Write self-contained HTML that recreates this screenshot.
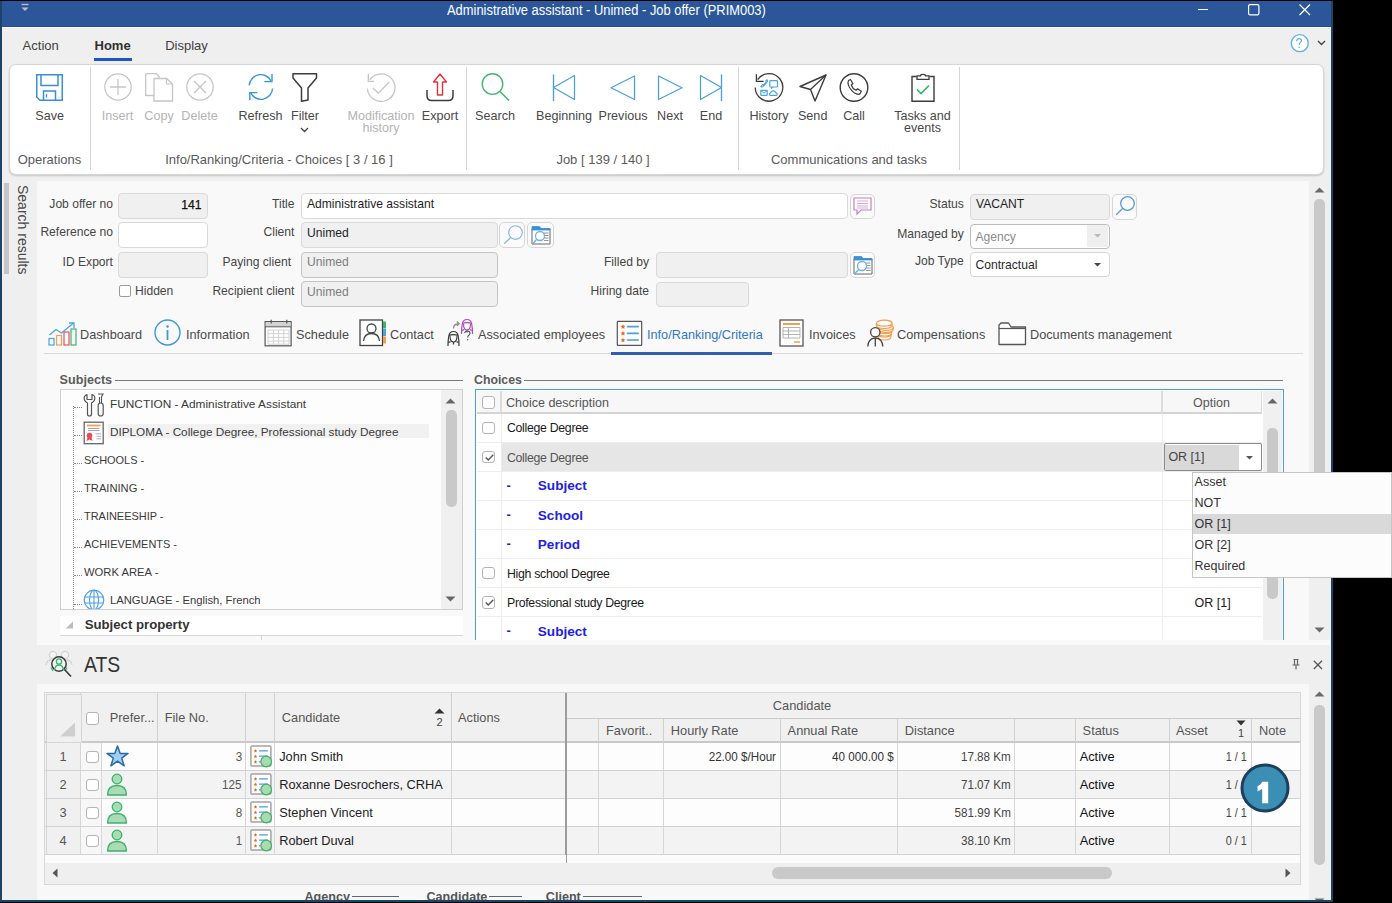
<!DOCTYPE html>
<html><head><meta charset="utf-8"><title>Job offer</title>
<style>
html,body{margin:0;padding:0;}
body{width:1392px;height:903px;background:#000;position:relative;overflow:hidden;font-family:"Liberation Sans",sans-serif;}
.t{position:absolute;white-space:nowrap;line-height:1;}
.r{position:absolute;}
.s{position:absolute;overflow:visible;}
</style></head><body>
<div class="r" style="left:0px;top:1px;width:1333px;height:900px;background:#1d4467;"></div><div class="r" style="left:2px;top:1px;width:1329px;height:899px;background:#efefef;"></div><div class="r" style="left:2px;top:1px;width:1329px;height:26px;background:#2b579a;"></div><div class="r" style="left:2px;top:26px;width:1329px;height:1px;background:#224c92;"></div><div class="r" style="left:2px;top:27px;width:1329px;height:1px;background:#fafafa;"></div><div class="t" style="top:3.92px;font-size:13.8px;color:#ffffff;left:446.80px;transform:scaleX(0.935);transform-origin:0 0;">Administrative assistant - Unimed - Job offer (PRIM003)</div><svg class="s" style="left:20px;top:3px;" width="10" height="10" viewBox="0 0 10 10" fill="none"><path d="M1.5 1.5H8.5" stroke="#b8bfcc" stroke-width="1.3"/><path d="M1.5 4.5H8.5L5 8Z" fill="#b8bfcc"/></svg><div class="r" style="left:1198px;top:9px;width:10px;height:1px;background:#ffffff;"></div><svg class="s" style="left:1248px;top:4px;" width="12" height="12" viewBox="0 0 12 12" fill="none"><rect x="0.6" y="0.6" width="10.3" height="10.3" rx="1.5" stroke="#fff" stroke-width="1.2"/></svg><svg class="s" style="left:1299px;top:4px;" width="12" height="12" viewBox="0 0 12 12" fill="none"><path d="M0.5 0.5L11 11M11 0.5L0.5 11" stroke="#fff" stroke-width="1.2"/></svg><div class="t" style="top:38.99px;font-size:13px;color:#404040;left:22.60px;">Action</div><div class="t" style="top:38.99px;font-size:13px;color:#303030;font-weight:bold;left:94.50px;">Home</div><div class="r" style="left:94px;top:58px;width:38px;height:3px;background:#1e55c0;"></div><div class="t" style="top:38.99px;font-size:13px;color:#404040;left:165.20px;">Display</div><svg class="s" style="left:1290px;top:34px;" width="20" height="20" viewBox="0 0 20 20" fill="none"><circle cx="9.8" cy="9.2" r="8.5" stroke="#64aee0" stroke-width="1.3" fill="#fff"/><path d="M6.6 7.2C6.6 5.6 7.7 4.6 9.1 4.6C10.6 4.6 11.5 5.6 11.5 6.8C11.5 8.3 9.2 8.6 9.2 10.6V11" stroke="#64aee0" stroke-width="1.2" fill="none"/><circle cx="9.2" cy="13.2" r="0.8" fill="#64aee0"/></svg><svg class="s" style="left:1317px;top:40px;" width="9" height="6" viewBox="0 0 9 6" fill="none"><path d="M1 1L4.5 4.5L8 1" stroke="#444" stroke-width="1.4"/></svg><div class="r" style="left:9px;top:64px;width:1315px;height:111px;background:#ffffff;border:1px solid #d6d6d6;box-sizing:border-box;border-radius:7px;box-shadow:0 1px 2px rgba(0,0,0,0.18);"></div><div class="r" style="left:90px;top:67px;width:1px;height:103px;background:#d4d4d4;"></div><div class="r" style="left:466px;top:67px;width:1px;height:103px;background:#d4d4d4;"></div><div class="r" style="left:738px;top:67px;width:1px;height:103px;background:#d4d4d4;"></div><div class="r" style="left:959px;top:67px;width:1px;height:103px;background:#d4d4d4;"></div><div class="t" style="top:109.63px;font-size:12.6px;color:#484848;left:-250.40px;width:600px;text-align:center;">Save</div><div class="t" style="top:109.63px;font-size:12.6px;color:#b4b4b4;left:-182.50px;width:600px;text-align:center;">Insert</div><div class="t" style="top:109.63px;font-size:12.6px;color:#b4b4b4;left:-141.00px;width:600px;text-align:center;">Copy</div><div class="t" style="top:109.63px;font-size:12.6px;color:#b4b4b4;left:-100.50px;width:600px;text-align:center;">Delete</div><div class="t" style="top:109.63px;font-size:12.6px;color:#484848;left:-39.50px;width:600px;text-align:center;">Refresh</div><div class="t" style="top:109.63px;font-size:12.6px;color:#484848;left:5.00px;width:600px;text-align:center;">Filter</div><svg class="s" style="left:300px;top:127px;" width="9" height="6" viewBox="0 0 9 6" fill="none"><path d="M1 1L4.5 4.5L8 1" stroke="#444" stroke-width="1.3"/></svg><div class="t" style="top:109.63px;font-size:12.6px;color:#b4b4b4;left:81.00px;width:600px;text-align:center;">Modification</div><div class="t" style="top:122.13px;font-size:12.6px;color:#b4b4b4;left:81.00px;width:600px;text-align:center;">history</div><div class="t" style="top:109.63px;font-size:12.6px;color:#484848;left:140.00px;width:600px;text-align:center;">Export</div><div class="t" style="top:109.63px;font-size:12.6px;color:#484848;left:195.00px;width:600px;text-align:center;">Search</div><div class="t" style="top:109.63px;font-size:12.6px;color:#484848;left:264.00px;width:600px;text-align:center;">Beginning</div><div class="t" style="top:109.63px;font-size:12.6px;color:#484848;left:323.00px;width:600px;text-align:center;">Previous</div><div class="t" style="top:109.63px;font-size:12.6px;color:#484848;left:370.00px;width:600px;text-align:center;">Next</div><div class="t" style="top:109.63px;font-size:12.6px;color:#484848;left:411.00px;width:600px;text-align:center;">End</div><div class="t" style="top:109.63px;font-size:12.6px;color:#484848;left:469.00px;width:600px;text-align:center;">History</div><div class="t" style="top:109.63px;font-size:12.6px;color:#484848;left:512.70px;width:600px;text-align:center;">Send</div><div class="t" style="top:109.63px;font-size:12.6px;color:#484848;left:554.00px;width:600px;text-align:center;">Call</div><div class="t" style="top:109.63px;font-size:12.6px;color:#484848;left:622.50px;width:600px;text-align:center;">Tasks and</div><div class="t" style="top:122.13px;font-size:12.6px;color:#484848;left:622.50px;width:600px;text-align:center;">events</div><div class="t" style="top:152.99px;font-size:13px;color:#5a5a5a;left:-250.50px;width:600px;text-align:center;">Operations</div><div class="t" style="top:152.99px;font-size:13px;color:#5a5a5a;left:-21.00px;width:600px;text-align:center;">Info/Ranking/Criteria - Choices [ 3 / 16 ]</div><div class="t" style="top:152.99px;font-size:13px;color:#5a5a5a;left:303.00px;width:600px;text-align:center;">Job [ 139 / 140 ]</div><div class="t" style="top:152.99px;font-size:13px;color:#5a5a5a;left:549.00px;width:600px;text-align:center;">Communications and tasks</div><svg class="s" style="left:36px;top:74px;" width="27" height="27" viewBox="0 0 27 27" fill="none"><path d="M0.75 0.75H26.25V26.25H4L0.75 23Z" stroke="#3a8fd5" stroke-width="1.5"/><path d="M5 0.75V11.5H22V0.75" stroke="#3a8fd5" stroke-width="1.5"/><path d="M7.5 26.25V17H19.5V26.25" stroke="#3a8fd5" stroke-width="1.5"/><path d="M10.5 20V23.5" stroke="#3a8fd5" stroke-width="1.3"/></svg><svg class="s" style="left:104px;top:73px;" width="28" height="28" viewBox="0 0 28 28" fill="none"><circle cx="14" cy="14" r="13.2" stroke="#c6c6c6" stroke-width="1.3"/><path d="M14 6V22M6 14H22" stroke="#c6c6c6" stroke-width="1.3"/></svg><svg class="s" style="left:145px;top:73px;" width="29" height="29" viewBox="0 0 29 29" fill="none"><path d="M0.7 0.7H11.5L14 3.2V5.5" stroke="#c6c6c6" stroke-width="1.3"/><path d="M0.7 0.7V22.5H9" stroke="#c6c6c6" stroke-width="1.3"/><path d="M9 5.5H21.5L27.5 11V28H9Z" stroke="#c6c6c6" stroke-width="1.3"/><path d="M21.5 5.5V11H27.5" stroke="#c6c6c6" stroke-width="1.1"/></svg><svg class="s" style="left:186px;top:73px;" width="28" height="28" viewBox="0 0 28 28" fill="none"><circle cx="14" cy="14" r="13.2" stroke="#c6c6c6" stroke-width="1.3"/><path d="M8 8L20 20M20 8L8 20" stroke="#c6c6c6" stroke-width="1.3"/></svg><svg class="s" style="left:247px;top:73px;" width="28" height="28" viewBox="0 0 28 28" fill="none"><path d="M2.2 12.5A11.6 11.6 0 0 1 24 7.8" stroke="#3298dc" stroke-width="1.4"/><path d="M25 1V8.6H17.4" stroke="#3298dc" stroke-width="1.4"/><path d="M25.6 15.5A11.6 11.6 0 0 1 3.8 20.2" stroke="#3298dc" stroke-width="1.4"/><path d="M2.8 27.2V19.6H10.4" stroke="#3298dc" stroke-width="1.4"/></svg><svg class="s" style="left:292px;top:73px;" width="26" height="29" viewBox="0 0 26 29" fill="none"><path d="M1 0.8H24.5V5L16 15V27L9.5 28.2V15L1 5Z" stroke="#3c3c3c" stroke-width="1.5" stroke-linejoin="round"/></svg><svg class="s" style="left:366px;top:73px;" width="30" height="30" viewBox="0 0 30 30" fill="none"><path d="M3.8 6.8A13.8 13.8 0 1 1 1.4 15.5" stroke="#c6c6c6" stroke-width="1.3"/><path d="M2.3 0.8V8.3H8.3" stroke="#c6c6c6" stroke-width="1.3"/><path d="M6.9 15.1L12.3 20.1L23.3 9" stroke="#c6c6c6" stroke-width="1.3"/></svg><svg class="s" style="left:426px;top:73px;" width="28" height="29" viewBox="0 0 28 29" fill="none"><path d="M1 17V22.5C1 25.5 2.5 27.5 5.5 27.5H22.5C25.5 27.5 27 25.5 27 22.5V17" stroke="#3c3c3c" stroke-width="1.5"/><path d="M14 1L20.5 9H16.5V22H11.5V9H7.5Z" stroke="#e8323a" stroke-width="1.4" stroke-linejoin="round"/></svg><svg class="s" style="left:481px;top:72px;" width="30" height="30" viewBox="0 0 30 30" fill="none"><circle cx="11.5" cy="12" r="10.3" stroke="#44b574" stroke-width="1.35"/><path d="M19 19.5L28 28.5" stroke="#44b574" stroke-width="1.6"/></svg><svg class="s" style="left:552px;top:74px;" width="25" height="28" viewBox="0 0 25 28" fill="none"><path d="M1.5 0.5V27" stroke="#49a0dc" stroke-width="1.35"/><path d="M22.5 1.5V25.5L1.5 13.5Z" stroke="#49a0dc" stroke-width="1.25" stroke-linejoin="round"/></svg><svg class="s" style="left:610px;top:75px;" width="26" height="26" viewBox="0 0 26 26" fill="none"><path d="M24.5 1V24.5L1 12.75Z" stroke="#49a0dc" stroke-width="1.25" stroke-linejoin="round"/></svg><svg class="s" style="left:657px;top:75px;" width="26" height="26" viewBox="0 0 26 26" fill="none"><path d="M1.5 1V24.5L25 12.75Z" stroke="#49a0dc" stroke-width="1.25" stroke-linejoin="round"/></svg><svg class="s" style="left:699px;top:74px;" width="25" height="28" viewBox="0 0 25 28" fill="none"><path d="M22.5 0.5V27" stroke="#49a0dc" stroke-width="1.35"/><path d="M1.5 1.5V25.5L22.5 13.5Z" stroke="#49a0dc" stroke-width="1.25" stroke-linejoin="round"/></svg><svg class="s" style="left:754px;top:73px;" width="30" height="30" viewBox="0 0 30 30" fill="none"><path d="M3.6 6.6A13.8 13.8 0 1 1 1.2 14.5" stroke="#3c3c3c" stroke-width="1.3"/><path d="M2.4 1.2V8.3H9.6" stroke="#3c3c3c" stroke-width="1.3"/><rect x="15.8" y="7.6" width="7.7" height="6.4" rx="0.8" stroke="#4aa3df" stroke-width="1.2"/><path d="M17.5 14V15.8L19.3 14" stroke="#4aa3df" stroke-width="1"/><path d="M6.8 13.6C7.5 14.3 8.5 14.2 9.2 13.4L13.2 8.8C13.8 8 13.6 7.2 12.8 6.8L11.8 7.9L12.2 9L9.8 11.8L8.6 11.6Z" stroke="#4aa3df" stroke-width="1.1" stroke-linejoin="round"/><rect x="6.8" y="17.3" width="6.4" height="5" rx="0.5" stroke="#4aa3df" stroke-width="1.2"/><path d="M6.8 17.6L10 20.2L13.2 17.6" stroke="#4aa3df" stroke-width="1"/><path d="M16.5 22.4C15.2 22.4 15 20.2 16.6 19.9C17.2 17.4 21 17.3 21.6 19.6C23.5 19.6 23.8 22.4 22.2 22.4Z" stroke="#4aa3df" stroke-width="1.2" stroke-linejoin="round"/></svg><svg class="s" style="left:799px;top:74px;" width="28" height="28" viewBox="0 0 28 28" fill="none"><path d="M27 1L1 12.5L11.5 15.5L16 27Z" stroke="#3c3c3c" stroke-width="1.4" stroke-linejoin="round"/><path d="M11.5 15.5L27 1" stroke="#3c3c3c" stroke-width="1.3"/></svg><svg class="s" style="left:839px;top:73px;" width="30" height="30" viewBox="0 0 30 30" fill="none"><circle cx="15" cy="14.5" r="13.8" stroke="#3c3c3c" stroke-width="1.4"/><path d="M9.5 7.5L11.5 6.5L13.8 10.5L12.3 12C13 14.3 14.8 16.3 17 17.3L18.6 15.8L22.3 18.3L21.2 20.5C19.5 22.5 15.5 20.5 12.8 17.6C10 14.6 8 10 9.5 7.5Z" stroke="#3c3c3c" stroke-width="1.2" stroke-linejoin="round"/></svg><svg class="s" style="left:910px;top:73px;" width="26" height="30" viewBox="0 0 26 30" fill="none"><path d="M6.5 3.5H2V28.2H24V3.5H19.5" stroke="#3c3c3c" stroke-width="1.4"/><path d="M7 6.3V2.8H10.5C10.5 0.8 15.5 0.8 15.5 2.8H19V6.3Z" stroke="#3c3c3c" stroke-width="1.3"/><path d="M7 16.5L11 20.5L19 12.5" stroke="#2fb36a" stroke-width="1.6"/></svg><div class="r" style="left:4px;top:183px;width:5px;height:91px;background:#c4c4c4;"></div><div class="t" style="left:16px;top:185px;font-size:14px;color:#484848;writing-mode:vertical-rl;letter-spacing:0px;">Search results</div><div class="r" style="left:37px;top:181px;width:1272px;height:464px;background:#f9f9f9;"></div><div class="r" style="left:1309px;top:639px;width:21px;height:6px;background:#f9f9f9;"></div><div class="t" style="top:197.55px;font-size:12.1px;color:#454545;right:1279.00px;">Job offer no</div><div class="r" style="left:118px;top:193px;width:90px;height:26px;background:#f0f0f0;border:1px solid #d9d9d9;box-sizing:border-box;border-radius:4px;"></div><div class="t" style="top:198.77px;font-size:12.2px;color:#111111;right:1190.50px;-webkit-text-stroke:0.25px #111;">141</div><div class="t" style="top:226.05px;font-size:12.1px;color:#454545;right:1279.00px;">Reference no</div><div class="r" style="left:118px;top:222px;width:90px;height:26px;background:#ffffff;border:1px solid #d9d9d9;box-sizing:border-box;border-radius:4px;"></div><div class="t" style="top:255.75px;font-size:12.1px;color:#454545;right:1279.00px;">ID Export</div><div class="r" style="left:118px;top:252px;width:90px;height:26px;background:#f0f0f0;border:1px solid #d9d9d9;box-sizing:border-box;border-radius:4px;"></div><div class="r" style="left:119px;top:285px;width:12px;height:12px;background:#fff;border:1px solid #9a9a9a;box-sizing:border-box;border-radius:2px;"></div><div class="t" style="top:284.95px;font-size:12.1px;color:#454545;left:135.00px;">Hidden</div><div class="t" style="top:197.55px;font-size:12.1px;color:#454545;right:1097.60px;">Title</div><div class="r" style="left:301px;top:193px;width:547px;height:26px;background:#ffffff;border:1px solid #d9d9d9;box-sizing:border-box;border-radius:4px;"></div><div class="t" style="top:198.25px;font-size:12.1px;color:#1e1e1e;left:307.00px;">Administrative assistant</div><div class="t" style="top:226.05px;font-size:12.1px;color:#454545;right:1097.60px;">Client</div><div class="r" style="left:301px;top:222px;width:197px;height:25.5px;background:#f0f0f0;border:1px solid #d9d9d9;box-sizing:border-box;border-radius:4px;"></div><div class="t" style="top:226.55px;font-size:12.1px;color:#1e1e1e;left:307.00px;">Unimed</div><div class="t" style="top:255.75px;font-size:12.1px;color:#454545;right:1101.00px;">Paying client</div><div class="r" style="left:301px;top:252px;width:197px;height:26px;background:#f0f0f0;border:1px solid #c4c4c4;box-sizing:border-box;border-radius:4px;"></div><div class="t" style="top:256.45px;font-size:12.1px;color:#7d7d7d;left:307.00px;">Unimed</div><div class="t" style="top:285.25px;font-size:12.1px;color:#454545;right:1097.60px;">Recipient client</div><div class="r" style="left:301px;top:281px;width:197px;height:26px;background:#f0f0f0;border:1px solid #c4c4c4;box-sizing:border-box;border-radius:4px;"></div><div class="t" style="top:285.95px;font-size:12.1px;color:#7d7d7d;left:307.00px;">Unimed</div><div class="t" style="top:255.75px;font-size:12.1px;color:#454545;right:743.00px;">Filled by</div><div class="r" style="left:655.5px;top:251.5px;width:192.0px;height:26.0px;background:#f0f0f0;border:1px solid #d9d9d9;box-sizing:border-box;border-radius:4px;"></div><div class="t" style="top:285.25px;font-size:12.1px;color:#454545;right:743.00px;">Hiring date</div><div class="r" style="left:655.5px;top:281.5px;width:93.5px;height:25.5px;background:#f0f0f0;border:1px solid #d9d9d9;box-sizing:border-box;border-radius:4px;"></div><div class="t" style="top:197.55px;font-size:12.1px;color:#454545;right:428.20px;">Status</div><div class="r" style="left:970px;top:193.5px;width:139.5px;height:26.0px;background:#f0f0f0;border:1px solid #d9d9d9;box-sizing:border-box;border-radius:4px;"></div><div class="t" style="top:198.25px;font-size:12.1px;color:#1e1e1e;left:976.00px;">VACANT</div><div class="t" style="top:228.05px;font-size:12.1px;color:#454545;right:428.20px;">Managed by</div><div class="r" style="left:970px;top:223.5px;width:139.5px;height:25.0px;background:#ffffff;border:1px solid #bdbdbd;box-sizing:border-box;border-radius:4px;"></div><div class="r" style="left:1087px;top:225px;width:21px;height:22px;background:#efefef;"></div><svg class="s" style="left:1094px;top:234px;" width="7" height="4" viewBox="0 0 7 4" fill="none"><path d="M0 0H7L3.5 3.5Z" fill="#b8b8b8"/></svg><div class="t" style="top:231.25px;font-size:12.1px;color:#8a8a8a;left:975.50px;">Agency</div><div class="t" style="top:255.35px;font-size:12.1px;color:#454545;right:428.20px;">Job Type</div><div class="r" style="left:970px;top:252px;width:139.5px;height:24.5px;background:#ffffff;border:1px solid #d6d6d6;box-sizing:border-box;border-radius:4px;"></div><div class="t" style="top:259.25px;font-size:12.1px;color:#2a2a2a;left:975.50px;">Contractual</div><svg class="s" style="left:1094px;top:262.5px;" width="7" height="4" viewBox="0 0 7 4" fill="none"><path d="M0 0H7L3.5 3.5Z" fill="#444"/></svg><div class="r" style="left:849.5px;top:193.5px;width:25.5px;height:25.5px;background:#fbfbfb;border:1.3px solid #d6d6d6;box-sizing:border-box;border-radius:5px;"></div><svg class="s" style="left:853px;top:197px;" width="19" height="18" viewBox="0 0 19 18" fill="none"><path d="M1 1H18V13H8L4 17V13H1Z" stroke="#c57fce" stroke-width="1.2" fill="#fff"/><path d="M4 4H15M4 6.5H15M4 9H15M4 11H15" stroke="#d3a0d9" stroke-width="0.9"/></svg><div class="r" style="left:499px;top:221.5px;width:26px;height:26.5px;background:#fbfbfb;border:1.3px solid #d6d6d6;box-sizing:border-box;border-radius:5px;"></div><svg class="s" style="left:502px;top:224px;" width="22" height="22" viewBox="0 0 22 22" fill="none"><circle cx="13.5" cy="8.5" r="6.8" stroke="#7fb9e6" stroke-width="1.15"/><path d="M8.8 13.3L2.2 19.8" stroke="#7fb9e6" stroke-width="1.2"/></svg><div class="r" style="left:527px;top:221.5px;width:27px;height:26.5px;background:#fbfbfb;border:1.3px solid #d6d6d6;box-sizing:border-box;border-radius:5px;"></div><svg class="s" style="left:531px;top:225px;" width="20" height="20" viewBox="0 0 20 20" fill="none"><path d="M1 4H19V19H1Z" stroke="#666" stroke-width="1" fill="#fff"/><path d="M1 1.5H8.5L10 3.5H19V5H1Z" fill="#3e8fd3" stroke="#3e8fd3" stroke-width="0.8"/><path d="M13 8H17.5M13 10.5H17.5M13 13H17.5M13 15.5H17.5" stroke="#888" stroke-width="0.9"/><circle cx="9" cy="11" r="4.5" stroke="#6ab2e6" stroke-width="1.3" fill="#fff"/><path d="M5.8 14.3L1.5 19" stroke="#6ab2e6" stroke-width="1.3"/></svg><div class="r" style="left:849.5px;top:251.5px;width:25.5px;height:26.0px;background:#fbfbfb;border:1.3px solid #d6d6d6;box-sizing:border-box;border-radius:5px;"></div><svg class="s" style="left:852.5px;top:255px;" width="20" height="20" viewBox="0 0 20 20" fill="none"><path d="M1 4H19V19H1Z" stroke="#666" stroke-width="1" fill="#fff"/><path d="M1 1.5H8.5L10 3.5H19V5H1Z" fill="#3e8fd3" stroke="#3e8fd3" stroke-width="0.8"/><path d="M13 8H17.5M13 10.5H17.5M13 13H17.5M13 15.5H17.5" stroke="#888" stroke-width="0.9"/><circle cx="9" cy="11" r="4.5" stroke="#6ab2e6" stroke-width="1.3" fill="#fff"/><path d="M5.8 14.3L1.5 19" stroke="#6ab2e6" stroke-width="1.3"/></svg><div class="r" style="left:1111.8px;top:193.5px;width:25.200000000000045px;height:26.0px;background:#fbfbfb;border:1.3px solid #d6d6d6;box-sizing:border-box;border-radius:5px;"></div><svg class="s" style="left:1114px;top:195px;" width="22" height="22" viewBox="0 0 22 22" fill="none"><circle cx="13.5" cy="8.5" r="6.8" stroke="#5b9ad6" stroke-width="1.3"/><path d="M8.8 13.3L2.2 19.8" stroke="#5b9ad6" stroke-width="1.2"/></svg><div class="r" style="left:44px;top:353px;width:1259px;height:1px;background:#d9d9d9;"></div><div class="r" style="left:611px;top:352px;width:161px;height:3px;background:#2f5fae;"></div><div class="t" style="top:327.94px;font-size:13.3px;color:#4a4a4a;left:80.20px;transform:scaleX(0.955);transform-origin:0 0;">Dashboard</div><div class="t" style="top:327.94px;font-size:13.3px;color:#4a4a4a;left:186.00px;transform:scaleX(0.955);transform-origin:0 0;">Information</div><div class="t" style="top:327.94px;font-size:13.3px;color:#4a4a4a;left:295.60px;transform:scaleX(0.955);transform-origin:0 0;">Schedule</div><div class="t" style="top:327.94px;font-size:13.3px;color:#4a4a4a;left:389.50px;transform:scaleX(0.955);transform-origin:0 0;">Contact</div><div class="t" style="top:327.94px;font-size:13.3px;color:#4a4a4a;left:478.00px;transform:scaleX(0.955);transform-origin:0 0;">Associated employees</div><div class="t" style="top:327.94px;font-size:13.3px;color:#3277c6;left:646.50px;transform:scaleX(0.955);transform-origin:0 0;">Info/Ranking/Criteria</div><div class="t" style="top:327.94px;font-size:13.3px;color:#4a4a4a;left:808.60px;transform:scaleX(0.955);transform-origin:0 0;">Invoices</div><div class="t" style="top:327.94px;font-size:13.3px;color:#4a4a4a;left:897.30px;transform:scaleX(0.955);transform-origin:0 0;">Compensations</div><div class="t" style="top:327.94px;font-size:13.3px;color:#4a4a4a;left:1029.50px;transform:scaleX(0.955);transform-origin:0 0;">Documents management</div><svg class="s" style="left:48px;top:321px;" width="30" height="25" viewBox="0 0 30 25" fill="none"><path d="M1.5 14L8 8.5L13.5 12L25 2.5" stroke="#4aa3df" stroke-width="1.3"/><path d="M21 2H26V7" stroke="#4aa3df" stroke-width="1.3"/><rect x="1" y="17.5" width="5" height="6.5" stroke="#4aa3df" stroke-width="1.2"/><rect x="8.5" y="14.5" width="5" height="9.5" stroke="#f0a050" stroke-width="1.2"/><rect x="16" y="11" width="5" height="13" stroke="#e8505a" stroke-width="1.2"/><rect x="23" y="8" width="5" height="16" stroke="#3cb371" stroke-width="1.2"/></svg><svg class="s" style="left:154px;top:319px;" width="28" height="28" viewBox="0 0 28 28" fill="none"><circle cx="13.5" cy="13.5" r="12.5" stroke="#3d98d8" stroke-width="1.4"/><path d="M13.5 11V21" stroke="#3d98d8" stroke-width="1.8"/><circle cx="13.5" cy="7.5" r="1.2" fill="#3d98d8"/></svg><svg class="s" style="left:264px;top:319px;" width="29" height="28" viewBox="0 0 29 28" fill="none"><rect x="1.1" y="2.6" width="26" height="24.2" stroke="#555" stroke-width="1.2" fill="#fff"/><path d="M1.7 3.2H26.5V7.5H1.7Z" fill="#d2d2d2"/><path d="M1.1 7.8H27.1" stroke="#555" stroke-width="1"/><path d="M7.2 0.8V4.5M22.8 0.8V4.5" stroke="#555" stroke-width="1.2"/><path d="M4 11H25M4 14.7H25M4 18.4H25M4 22.1H25M4 25.2H25M4 11V25M9.4 11V25M14.6 11V25M19.8 11V25M25 11V25" stroke="#cdcdcd" stroke-width="0.9"/></svg><svg class="s" style="left:359px;top:319px;" width="28" height="28" viewBox="0 0 28 28" fill="none"><rect x="1" y="1" width="22.5" height="25.5" stroke="#444" stroke-width="1.3" fill="#fff"/><circle cx="12.5" cy="9.5" r="4.5" stroke="#444" stroke-width="1.3"/><path d="M4.5 22C5 16.5 8.5 14.5 12.5 14.5C16.5 14.5 20 16.5 20.5 22" stroke="#444" stroke-width="1.3"/><rect x="24" y="2.5" width="3" height="7" fill="#3cb371"/><rect x="24" y="10" width="3" height="7" fill="#4aa3df"/><rect x="24" y="17.5" width="3" height="7" fill="#f0a050"/></svg><svg class="s" style="left:446px;top:318px;" width="30" height="30" viewBox="0 0 30 30" fill="none"><g transform="translate(14.5,0.5)" stroke="#b04cbc"><path d="M1 15.5C1 11 1.3 8 1.8 5.5C2.3 2.3 4.3 1 6.5 1C8.7 1 10.7 2.3 11.2 5.5C11.7 8 12 11 12 15.5" stroke-width="1.2"/><path d="M2 5C4 3.8 9 3.8 11 5" stroke-width="1.3"/><path d="M3 5.5C3 9.5 4.5 11.5 6.5 11.5C8.5 11.5 10 9.5 10 5.5" stroke-width="1.1"/><path d="M1.5 12L3.5 11.2M11.5 12L9.5 11.2M6.5 11.5V14" stroke-width="1.3"/></g><g transform="translate(1,12.5)" stroke="#3a3a3a"><path d="M1 15.5C1 11 1.3 8 1.8 5.5C2.3 2.3 4.3 1 6.5 1C8.7 1 10.7 2.3 11.2 5.5C11.7 8 12 11 12 15.5" stroke-width="1.2"/><path d="M2 5C4 3.8 9 3.8 11 5" stroke-width="1.3"/><path d="M3 5.5C3 9.5 4.5 11.5 6.5 11.5C8.5 11.5 10 9.5 10 5.5" stroke-width="1.1"/><path d="M1.5 12L3.5 11.2M11.5 12L9.5 11.2M6.5 11.5V14" stroke-width="1.3"/></g><path d="M7.5 10.5C7.5 7.5 9 5.8 12.5 5.8" stroke="#8a8a8a" stroke-width="1.3"/><path d="M10.8 3.6L13.2 5.8L10.8 8" stroke="#8a8a8a" stroke-width="1.3"/><path d="M18.5 15C19 13.5 20.5 13 21.5 13C23 13 24 14 24 15.3C24 17 21.7 17.5 21.7 19.5" stroke="#555" stroke-width="1.1"/><circle cx="21.7" cy="21.8" r="0.7" fill="#555"/></svg><svg class="s" style="left:616px;top:320px;" width="27" height="27" viewBox="0 0 27 27" fill="none"><rect x="1.3" y="1.3" width="24.4" height="24" rx="0.6" stroke="#555" stroke-width="1.2" fill="#fff"/><path d="M7.00 4.20L7.71 5.83L9.47 6.00L8.14 7.17L8.53 8.90L7.00 8.00L5.47 8.90L5.86 7.17L4.53 6.00L6.29 5.83Z" fill="#ea6a1e"/><path d="M7.00 10.90L7.71 12.53L9.47 12.70L8.14 13.87L8.53 15.60L7.00 14.70L5.47 15.60L5.86 13.87L4.53 12.70L6.29 12.53Z" fill="#ea6a1e"/><path d="M7.00 17.60L7.71 19.23L9.47 19.40L8.14 20.57L8.53 22.30L7.00 21.40L5.47 22.30L5.86 20.57L4.53 19.40L6.29 19.23Z" fill="#ea6a1e"/><path d="M11.5 6.6H22.2M11.5 13.3H22.2M11.5 20H22.2" stroke="#4a9fd8" stroke-width="1.7" stroke-linecap="round"/></svg><svg class="s" style="left:779px;top:319px;" width="26" height="28" viewBox="0 0 26 28" fill="none"><rect x="1" y="1" width="23" height="26" stroke="#555" stroke-width="1.3" fill="#fff"/><path d="M4 5H21" stroke="#f0a050" stroke-width="2"/><path d="M4 8.5H21V19H4Z M4 12H21M4 15.5H21M9.5 8.5V19" stroke="#aaa" stroke-width="0.9"/><path d="M15 23H21" stroke="#f0a050" stroke-width="1.5"/></svg><svg class="s" style="left:866px;top:318px;" width="30" height="30" viewBox="0 0 30 30" fill="none"><path d="M12 18.5C12 21 15 22 18.5 22C22 22 25 21 25 18.5V16.5H12Z" stroke="#f0a050" stroke-width="1.2" fill="#fff"/><ellipse cx="18.5" cy="16.5" rx="6.5" ry="2.5" stroke="#f0a050" stroke-width="1.2" fill="#fff"/><path d="M12.5 15C12.5 17.3 15.5 18 19 18C22.5 18 25.5 17.3 25.5 15V13H12.5Z" stroke="#f0a050" stroke-width="1.2" fill="#fff"/><ellipse cx="19" cy="13" rx="6.5" ry="2.6" stroke="#f0a050" stroke-width="1.2" fill="#fff"/><path d="M12.7 11C12.7 13.5 16 14.3 20 14.3C24 14.3 27.3 13.5 27.3 11V9.5H12.7Z" stroke="#f0a050" stroke-width="1.2" fill="#fff"/><ellipse cx="20" cy="9.5" rx="7.3" ry="2.8" stroke="#f0a050" stroke-width="1.2" fill="#fff"/><path d="M10.4 5.2V7.5C10.4 9.5 14 10.5 18.2 10.5C22.4 10.5 26 9.5 26 7.5V5.2" stroke="#f0a050" stroke-width="1.2" fill="#fff"/><ellipse cx="18.2" cy="5.2" rx="7.8" ry="3" stroke="#f0a050" stroke-width="1.2" fill="#fff"/><circle cx="9.3" cy="14.3" r="4.7" stroke="#444" stroke-width="1.3" fill="#f9f9f9"/><path d="M1.8 28.5C2.2 23 5 20.2 9.3 20.2C13.6 20.2 16.4 23 16.8 28.5M9.3 20.5V28.5" stroke="#444" stroke-width="1.3"/></svg><svg class="s" style="left:998px;top:321px;" width="29" height="25" viewBox="0 0 29 25" fill="none"><path d="M1 4V23.5H27.5V6H13L10.5 2H3Z" stroke="#555" stroke-width="1.3" fill="#fff" stroke-linejoin="round"/><path d="M1 7.5H27.5" stroke="#555" stroke-width="1.2"/></svg><div class="t" style="top:373.83px;font-size:12.6px;color:#5c5c5c;font-weight:bold;left:59.60px;">Subjects</div><div class="r" style="left:115px;top:380px;width:348px;height:1px;background:#7a7a7a;"></div><div class="r" style="left:60px;top:389px;width:403px;height:221px;background:#fdfdfd;border:1px solid #cfcfcf;box-sizing:border-box;"></div><div class="r" style="left:441px;top:390px;width:21px;height:219px;background:#f0f0f0;"></div><div class="r" style="left:445.5px;top:410px;width:11.0px;height:97px;background:#c9c9c9;border-radius:5px;"></div><svg class="s" style="left:445px;top:398px;" width="11" height="6" viewBox="0 0 11 6" fill="none"><path d="M0.5 5.5H10.5L5.5 0.5Z" fill="#666"/></svg><svg class="s" style="left:445px;top:596px;" width="11" height="6" viewBox="0 0 11 6" fill="none"><path d="M0.5 0.5H10.5L5.5 5.5Z" fill="#666"/></svg><div class="r" style="left:73px;top:406px;width:0;height:203px;border-left:1px dotted #8a8a8a;"></div><div class="r" style="left:108px;top:424px;width:321px;height:14px;background:#f1f1f1;"></div><div class="r" style="left:74px;top:407.1px;width:8px;height:0;border-top:1px dotted #8a8a8a;"></div><div class="t" style="top:398.61px;font-size:11.8px;color:#3a3a3a;left:109.50px;transform:scaleX(1.0041);transform-origin:0 0;">FUNCTION - Administrative Assistant</div><div class="r" style="left:74px;top:435.2px;width:8px;height:0;border-top:1px dotted #8a8a8a;"></div><div class="t" style="top:426.66px;font-size:11.8px;color:#3a3a3a;left:109.50px;transform:scaleX(0.9952);transform-origin:0 0;">DIPLOMA - College Degree, Professional study Degree</div><div class="r" style="left:74px;top:463.2px;width:8px;height:0;border-top:1px dotted #8a8a8a;"></div><div class="t" style="top:454.71px;font-size:11.8px;color:#3a3a3a;left:84.40px;transform:scaleX(0.9274);transform-origin:0 0;">SCHOOLS -</div><div class="r" style="left:74px;top:491.2px;width:8px;height:0;border-top:1px dotted #8a8a8a;"></div><div class="t" style="top:482.76px;font-size:11.8px;color:#3a3a3a;left:84.40px;transform:scaleX(0.9468);transform-origin:0 0;">TRAINING -</div><div class="r" style="left:74px;top:519.3px;width:8px;height:0;border-top:1px dotted #8a8a8a;"></div><div class="t" style="top:510.81px;font-size:11.8px;color:#3a3a3a;left:84.40px;transform:scaleX(0.9279);transform-origin:0 0;">TRAINEESHIP -</div><div class="r" style="left:74px;top:547.4px;width:8px;height:0;border-top:1px dotted #8a8a8a;"></div><div class="t" style="top:538.86px;font-size:11.8px;color:#3a3a3a;left:84.40px;transform:scaleX(0.9271);transform-origin:0 0;">ACHIEVEMENTS -</div><div class="r" style="left:74px;top:575.4px;width:8px;height:0;border-top:1px dotted #8a8a8a;"></div><div class="t" style="top:566.91px;font-size:11.8px;color:#3a3a3a;left:84.40px;transform:scaleX(0.9535);transform-origin:0 0;">WORK AREA -</div><div class="r" style="left:74px;top:603.5px;width:8px;height:0;border-top:1px dotted #8a8a8a;"></div><div class="t" style="top:594.96px;font-size:11.8px;color:#3a3a3a;left:109.50px;transform:scaleX(0.9529);transform-origin:0 0;">LANGUAGE - English, French</div><svg class="s" style="left:83px;top:393px;" width="22" height="24" viewBox="0 0 22 24" fill="none"><path d="M4 1.5C1.5 2.5 0.8 5 1.5 7C2 8.5 3.5 9.5 4.5 10V21C4.5 22.5 5.5 23 6.5 23C7.5 23 8.5 22.5 8.5 21V10C9.5 9.5 11 8.5 11.5 7C12.2 5 11.5 2.5 9 1.5V6.5H4Z" stroke="#555" stroke-width="1.2" stroke-linejoin="round"/><path d="M15 1H20L18.5 4V10M16.5 4V10" stroke="#555" stroke-width="1.1"/><rect x="15.2" y="10" width="5" height="13" rx="2.5" stroke="#555" stroke-width="1.2"/></svg><svg class="s" style="left:83px;top:421px;" width="22" height="24" viewBox="0 0 22 24" fill="none"><rect x="1.2" y="1.2" width="19" height="21.5" stroke="#666" stroke-width="1.3" fill="#fff"/><path d="M4 4.5H17.5" stroke="#f0a050" stroke-width="1.8"/><path d="M5 7.5H16.5M5 9.5H16.5" stroke="#999" stroke-width="0.9"/><path d="M12.5 12.8H18M13.5 15.3H18M13.5 17.8H18" stroke="#9a9a9a" stroke-width="0.8"/><circle cx="6.5" cy="14.5" r="2.8" fill="#e84a5a"/><path d="M4.5 16.5L3.5 20L6.5 18.5L9.5 20L8.5 16.5" fill="#e84a5a"/></svg><svg class="s" style="left:83px;top:589px;clip-path:inset(0 0 2px 0);" width="22" height="22" viewBox="0 0 22 22" fill="none"><circle cx="11" cy="11" r="9.8" stroke="#4aa3df" stroke-width="1.2"/><ellipse cx="11" cy="11" rx="4.5" ry="9.8" stroke="#4aa3df" stroke-width="1.1"/><path d="M11 1.2V20.8M1.5 8H20.5M1.5 14H20.5" stroke="#4aa3df" stroke-width="1.1"/></svg><div class="r" style="left:60px;top:609px;width:403px;height:1px;background:#cfcfcf;"></div><div class="r" style="left:60px;top:616px;width:403px;height:19px;background:#ffffff;"></div><svg class="s" style="left:65px;top:621px;" width="9" height="8" viewBox="0 0 9 8" fill="none"><path d="M8 0.5V7.5H0.5Z" fill="#bdbdbd"/></svg><div class="t" style="top:618.12px;font-size:13.2px;color:#333;font-weight:bold;left:84.70px;">Subject property</div><div class="r" style="left:60px;top:635px;width:403px;height:1px;background:#d6d6d6;"></div><div class="r" style="left:261px;top:636px;width:1px;height:4px;background:#cfcfcf;"></div><div class="t" style="top:373.79px;font-size:12.3px;color:#5c5c5c;font-weight:bold;left:474.00px;">Choices</div><div class="r" style="left:524px;top:380px;width:759px;height:1px;background:#7a7a7a;"></div><div class="r" style="left:475px;top:389px;width:809px;height:251px;background:#ffffff;border:1px solid #4c9edb;box-sizing:border-box;border-bottom:none;"></div><div class="r" style="left:477px;top:391px;width:785px;height:22px;background:#f7f7f7;"></div><div class="r" style="left:477px;top:412px;width:785px;height:2px;background:#d4d4d4;"></div><div class="r" style="left:500px;top:391px;width:2px;height:22px;background:#dcdcdc;"></div><div class="r" style="left:1161px;top:391px;width:2px;height:22px;background:#dcdcdc;"></div><div class="r" style="left:1261px;top:391px;width:1px;height:22px;background:#dcdcdc;"></div><div class="r" style="left:482.3px;top:396.2px;width:13.0px;height:12.5px;background:#fff;border:1px solid #b4b4b4;box-sizing:border-box;border-radius:3px;"></div><div class="t" style="top:396.62px;font-size:12.5px;color:#555;left:506.00px;">Choice description</div><div class="t" style="top:396.62px;font-size:12.5px;color:#555;left:911.50px;width:600px;text-align:center;">Option</div><div class="r" style="left:1263px;top:391px;width:19px;height:249px;background:#f0f0f0;"></div><svg class="s" style="left:1267px;top:398px;" width="11" height="6" viewBox="0 0 11 6" fill="none"><path d="M0.5 5.5H10.5L5.5 0.5Z" fill="#666"/></svg><div class="r" style="left:1267px;top:428px;width:10.5px;height:171px;background:#c9c9c9;border-radius:5px;"></div><div class="r" style="left:477px;top:442px;width:785px;height:1px;background:#ededed;"></div><div class="r" style="left:482.3px;top:421.7px;width:13.0px;height:12.5px;background:#fff;border:1px solid #b4b4b4;box-sizing:border-box;border-radius:3px;"></div><div class="t" style="top:422.49px;font-size:12.3px;color:#1a1a1a;left:507.00px;letter-spacing:-0.3px;">College Degree</div><div class="r" style="left:501.5px;top:443.05px;width:760.5px;height:28.05000000000001px;background:#e6e6e6;"></div><div class="r" style="left:477px;top:471px;width:785px;height:1px;background:#ededed;"></div><div class="r" style="left:482.3px;top:450.75px;width:13.0px;height:12.5px;background:#fff;border:1px solid #b4b4b4;box-sizing:border-box;border-radius:3px;"></div><svg class="s" style="left:484.8px;top:453.75px;" width="9" height="7" viewBox="0 0 9 7" fill="none"><path d="M0.8 3.5L3.3 6L8.3 0.8" stroke="#555" stroke-width="1.4"/></svg><div class="t" style="top:451.54px;font-size:12.3px;color:#555;left:507.00px;letter-spacing:-0.3px;">College Degree</div><div class="r" style="left:477px;top:500px;width:785px;height:1px;background:#ededed;"></div><div class="t" style="top:478.99px;font-size:13px;color:#2020d8;font-weight:bold;left:506.50px;">-</div><div class="t" style="top:479.48px;font-size:13.6px;color:#2222dd;font-weight:bold;left:537.80px;">Subject</div><div class="r" style="left:477px;top:529px;width:785px;height:1px;background:#ededed;"></div><div class="t" style="top:508.04px;font-size:13px;color:#2020d8;font-weight:bold;left:506.50px;">-</div><div class="t" style="top:508.53px;font-size:13.6px;color:#2222dd;font-weight:bold;left:537.80px;">School</div><div class="r" style="left:477px;top:558px;width:785px;height:1px;background:#ededed;"></div><div class="t" style="top:537.09px;font-size:13px;color:#2020d8;font-weight:bold;left:506.50px;">-</div><div class="t" style="top:537.58px;font-size:13.6px;color:#2222dd;font-weight:bold;left:537.80px;">Period</div><div class="r" style="left:477px;top:587px;width:785px;height:1px;background:#ededed;"></div><div class="r" style="left:482.3px;top:566.95px;width:13.0px;height:12.5px;background:#fff;border:1px solid #b4b4b4;box-sizing:border-box;border-radius:3px;"></div><div class="t" style="top:567.74px;font-size:12.3px;color:#1a1a1a;left:507.00px;letter-spacing:-0.3px;">High school Degree</div><div class="r" style="left:477px;top:616px;width:785px;height:1px;background:#ededed;"></div><div class="r" style="left:482.3px;top:596.0px;width:13.0px;height:12.5px;background:#fff;border:1px solid #b4b4b4;box-sizing:border-box;border-radius:3px;"></div><svg class="s" style="left:484.8px;top:599.0px;" width="9" height="7" viewBox="0 0 9 7" fill="none"><path d="M0.8 3.5L3.3 6L8.3 0.8" stroke="#555" stroke-width="1.4"/></svg><div class="t" style="top:596.79px;font-size:12.3px;color:#1a1a1a;left:507.00px;letter-spacing:-0.3px;">Professional study Degree</div><div class="r" style="left:477px;top:645px;width:785px;height:1px;background:#ededed;"></div><div class="t" style="top:624.24px;font-size:13px;color:#2020d8;font-weight:bold;left:506.50px;">-</div><div class="t" style="top:624.73px;font-size:13.6px;color:#2222dd;font-weight:bold;left:537.80px;">Subject</div><div class="r" style="left:501px;top:414px;width:1px;height:226px;background:#ececec;"></div><div class="r" style="left:1162px;top:414px;width:1px;height:226px;background:#ececec;"></div><div class="r" style="left:1163.5px;top:443px;width:98.0px;height:28px;background:#ffffff;border:1px solid #8c8c8c;box-sizing:border-box;border-radius:2px;"></div><div class="r" style="left:1165px;top:444.5px;width:74px;height:25.0px;background:#d9d9d9;"></div><div class="t" style="top:451.42px;font-size:12.5px;color:#444;left:1168.40px;">OR [1]</div><svg class="s" style="left:1246px;top:455.5px;" width="7" height="4" viewBox="0 0 7 4" fill="none"><path d="M0 0H7L3.5 3.5Z" fill="#555"/></svg><div class="t" style="top:596.72px;font-size:12.5px;color:#1a1a1a;left:1194.60px;">OR [1]</div><div class="r" style="left:1309px;top:181px;width:20px;height:459px;background:#efefef;"></div><svg class="s" style="left:1314px;top:187px;" width="11" height="6" viewBox="0 0 11 6" fill="none"><path d="M0.5 5.5H10.5L5.5 0.5Z" fill="#6a6a6a"/></svg><div class="r" style="left:1314px;top:199px;width:10.5px;height:361px;background:#c9c9c9;border-radius:5px;"></div><svg class="s" style="left:1314px;top:627px;" width="11" height="6" viewBox="0 0 11 6" fill="none"><path d="M0.5 0.5H10.5L5.5 5.5Z" fill="#6a6a6a"/></svg><div class="r" style="left:1192px;top:471.5px;width:200px;height:106.5px;background:#fcfcfc;border:1px solid #c6c6c6;box-sizing:border-box;"></div><div class="r" style="left:1193px;top:514px;width:198px;height:20px;background:#d9d9d9;"></div><div class="t" style="top:475.92px;font-size:12.5px;color:#333;left:1194.60px;">Asset</div><div class="t" style="top:496.92px;font-size:12.5px;color:#333;left:1194.60px;">NOT</div><div class="t" style="top:517.92px;font-size:12.5px;color:#333;left:1194.60px;">OR [1]</div><div class="t" style="top:538.92px;font-size:12.5px;color:#333;left:1194.60px;">OR [2]</div><div class="t" style="top:559.92px;font-size:12.5px;color:#333;left:1194.60px;">Required</div><div class="t" style="top:654.15px;font-size:22.5px;color:#333;left:83.70px;transform:scaleX(0.86);transform-origin:0 0;">ATS</div><svg class="s" style="left:45px;top:650px;" width="28" height="28" viewBox="0 0 28 28" fill="none"><circle cx="8" cy="5" r="3.6" stroke="#d4d4d4" stroke-width="1.3" fill="#f4f4f4"/><circle cx="20" cy="5" r="3.6" stroke="#d4d4d4" stroke-width="1.3" fill="#f4f4f4"/><path d="M1 15C1.5 11 4 9.5 8 9.5M27 15C26.5 11 24 9.5 20 9.5" stroke="#d4d4d4" stroke-width="1.3"/><circle cx="14" cy="14" r="7.2" stroke="#3c3c3c" stroke-width="1.5" fill="#f3f3f3"/><circle cx="14" cy="11.5" r="2.6" stroke="#3cb371" stroke-width="1.3"/><path d="M9.5 20C10 16.5 11.5 15 14 15C16.5 15 18 16.5 18.5 20" stroke="#3cb371" stroke-width="1.3"/><path d="M6 17.5L8 21M22 17.5L20 21" stroke="#3cb371" stroke-width="1.3"/><path d="M19.5 19.5L26 26.5" stroke="#3c3c3c" stroke-width="1.7"/></svg><svg class="s" style="left:1291px;top:659px;" width="10" height="11" viewBox="0 0 10 11" fill="none"><path d="M2.5 0.5H7.5M3.5 0.5V6M6.5 0.5V6M1.5 6H8.5M5 6V10.5" stroke="#666" stroke-width="1.2"/></svg><svg class="s" style="left:1313px;top:660px;" width="10" height="10" viewBox="0 0 10 10" fill="none"><path d="M0.8 0.8L9 9M9 0.8L0.8 9" stroke="#555" stroke-width="1.3"/></svg><div class="r" style="left:37px;top:684px;width:1272px;height:216px;background:#f8f8f8;"></div><div class="r" style="left:44px;top:692px;width:1257px;height:193px;background:#f0f0f0;border:1px solid #d8d8d8;box-sizing:border-box;"></div><div class="r" style="left:1309px;top:684px;width:21px;height:216px;background:#efefef;"></div><svg class="s" style="left:1314px;top:691px;" width="11" height="6" viewBox="0 0 11 6" fill="none"><path d="M0.5 5.5H10.5L5.5 0.5Z" fill="#6a6a6a"/></svg><div class="r" style="left:1314px;top:704.5px;width:10.5px;height:160.0px;background:#c9c9c9;border-radius:5px;"></div><svg class="s" style="left:1314px;top:898px;" width="11" height="6" viewBox="0 0 11 6" fill="none"><path d="M0.5 0.5H10.5L5.5 5.5Z" fill="#6a6a6a"/></svg><div class="r" style="left:45px;top:693px;width:1255px;height:49px;background:#f0f0f0;"></div><div class="r" style="left:45px;top:741px;width:1255px;height:2px;background:#c9c9c9;"></div><div class="r" style="left:101px;top:743px;width:1199px;height:28px;background:#fdfdfd;"></div><div class="r" style="left:80px;top:743px;width:21px;height:28px;background:#f7f7f7;"></div><div class="r" style="left:45px;top:743px;width:35px;height:28px;background:#f0f0f0;"></div><div class="r" style="left:45px;top:770px;width:1255px;height:1px;background:#d2d2d2;"></div><div class="r" style="left:45px;top:771px;width:1255px;height:0.5px;background:#e6e6e6;"></div><div class="r" style="left:101px;top:771px;width:1199px;height:28px;background:#f3f3f3;"></div><div class="r" style="left:80px;top:771px;width:21px;height:28px;background:#f7f7f7;"></div><div class="r" style="left:45px;top:771px;width:35px;height:28px;background:#f0f0f0;"></div><div class="r" style="left:45px;top:798px;width:1255px;height:1px;background:#d2d2d2;"></div><div class="r" style="left:45px;top:799px;width:1255px;height:0.5px;background:#e6e6e6;"></div><div class="r" style="left:101px;top:799px;width:1199px;height:28px;background:#fdfdfd;"></div><div class="r" style="left:80px;top:799px;width:21px;height:28px;background:#f7f7f7;"></div><div class="r" style="left:45px;top:799px;width:35px;height:28px;background:#f0f0f0;"></div><div class="r" style="left:45px;top:826px;width:1255px;height:1px;background:#d2d2d2;"></div><div class="r" style="left:45px;top:827px;width:1255px;height:0.5px;background:#e6e6e6;"></div><div class="r" style="left:101px;top:827px;width:1199px;height:28px;background:#f3f3f3;"></div><div class="r" style="left:80px;top:827px;width:21px;height:28px;background:#f7f7f7;"></div><div class="r" style="left:45px;top:827px;width:35px;height:28px;background:#f0f0f0;"></div><div class="r" style="left:45px;top:854px;width:1255px;height:1px;background:#d2d2d2;"></div><div class="r" style="left:45px;top:855px;width:1255px;height:0.5px;background:#e6e6e6;"></div><div class="r" style="left:46px;top:743px;width:1px;height:112px;background:#d6d6d6;"></div><div class="r" style="left:80px;top:743px;width:1px;height:112px;background:#d6d6d6;"></div><div class="r" style="left:101px;top:743px;width:1px;height:112px;background:#d6d6d6;"></div><div class="r" style="left:157px;top:743px;width:1px;height:112px;background:#d6d6d6;"></div><div class="r" style="left:245px;top:743px;width:1px;height:112px;background:#d6d6d6;"></div><div class="r" style="left:274px;top:743px;width:1px;height:112px;background:#d6d6d6;"></div><div class="r" style="left:451px;top:743px;width:1px;height:112px;background:#d6d6d6;"></div><div class="r" style="left:598px;top:743px;width:1px;height:112px;background:#d6d6d6;"></div><div class="r" style="left:663px;top:743px;width:1px;height:112px;background:#d6d6d6;"></div><div class="r" style="left:780px;top:743px;width:1px;height:112px;background:#d6d6d6;"></div><div class="r" style="left:897px;top:743px;width:1px;height:112px;background:#d6d6d6;"></div><div class="r" style="left:1014px;top:743px;width:1px;height:112px;background:#d6d6d6;"></div><div class="r" style="left:1075px;top:743px;width:1px;height:112px;background:#d6d6d6;"></div><div class="r" style="left:1169px;top:743px;width:1px;height:112px;background:#d6d6d6;"></div><div class="r" style="left:1251px;top:743px;width:1px;height:112px;background:#d6d6d6;"></div><div class="r" style="left:565px;top:693px;width:2px;height:175px;background:#9c9c9c;"></div><div class="r" style="left:80px;top:693px;width:1px;height:49px;background:#d0d0d0;"></div><div class="r" style="left:157px;top:693px;width:1px;height:49px;background:#d0d0d0;"></div><div class="r" style="left:245px;top:693px;width:1px;height:49px;background:#d0d0d0;"></div><div class="r" style="left:274px;top:693px;width:1px;height:49px;background:#d0d0d0;"></div><div class="r" style="left:451px;top:693px;width:1px;height:49px;background:#d0d0d0;"></div><div class="r" style="left:567px;top:718px;width:733px;height:1px;background:#c9c9c9;"></div><div class="r" style="left:598px;top:719px;width:1px;height:23px;background:#d0d0d0;"></div><div class="r" style="left:663px;top:719px;width:1px;height:23px;background:#d0d0d0;"></div><div class="r" style="left:780px;top:719px;width:1px;height:23px;background:#d0d0d0;"></div><div class="r" style="left:897px;top:719px;width:1px;height:23px;background:#d0d0d0;"></div><div class="r" style="left:1014px;top:719px;width:1px;height:23px;background:#d0d0d0;"></div><div class="r" style="left:1075px;top:719px;width:1px;height:23px;background:#d0d0d0;"></div><div class="r" style="left:1169px;top:719px;width:1px;height:23px;background:#d0d0d0;"></div><div class="r" style="left:1251px;top:719px;width:1px;height:23px;background:#d0d0d0;"></div><div class="r" style="left:46px;top:694px;width:35.5px;height:49px;background:#f0f0f0;border:1px solid #d6d6d6;box-sizing:border-box;"></div><svg class="s" style="left:59px;top:722px;" width="17" height="15" viewBox="0 0 17 15" fill="none"><path d="M16 0.5V14.5H1Z" fill="#cfcfcf"/></svg><div class="r" style="left:86px;top:712px;width:13px;height:12.5px;background:#fff;border:1px solid #b4b4b4;box-sizing:border-box;border-radius:3px;"></div><div class="t" style="top:711.66px;font-size:12.8px;color:#555;left:109.80px;">Prefer...</div><div class="t" style="top:711.66px;font-size:12.8px;color:#555;left:164.70px;">File No.</div><div class="t" style="top:712.16px;font-size:12.8px;color:#555;left:281.80px;">Candidate</div><svg class="s" style="left:434px;top:708px;" width="11" height="6" viewBox="0 0 11 6" fill="none"><path d="M0.5 5.5H10.5L5.5 0.5Z" fill="#333"/></svg><div class="t" style="top:717.19px;font-size:11px;color:#444;left:139.50px;width:600px;text-align:center;">2</div><div class="t" style="top:711.86px;font-size:12.8px;color:#555;left:458.00px;">Actions</div><div class="t" style="top:700.46px;font-size:12.8px;color:#555;left:502.00px;width:600px;text-align:center;">Candidate</div><div class="t" style="top:724.56px;font-size:12.8px;color:#555;left:606.00px;">Favorit..</div><div class="t" style="top:724.56px;font-size:12.8px;color:#555;left:670.80px;">Hourly Rate</div><div class="t" style="top:724.56px;font-size:12.8px;color:#555;left:787.60px;">Annual Rate</div><div class="t" style="top:724.56px;font-size:12.8px;color:#555;left:904.80px;">Distance</div><div class="t" style="top:724.56px;font-size:12.8px;color:#555;left:1082.60px;">Status</div><div class="t" style="top:724.56px;font-size:12.8px;color:#555;left:1175.90px;">Asset</div><svg class="s" style="left:1236px;top:720px;" width="10" height="6" viewBox="0 0 10 6" fill="none"><path d="M0.5 0.5H9.5L5 5.5Z" fill="#333"/></svg><div class="t" style="top:728.19px;font-size:11px;color:#444;left:941.00px;width:600px;text-align:center;">1</div><div class="t" style="top:724.56px;font-size:12.8px;color:#555;left:1259.00px;">Note</div><div class="t" style="top:750.76px;font-size:12.8px;color:#555;left:-237.00px;width:600px;text-align:center;">1</div><div class="r" style="left:85.5px;top:750.5px;width:13.0px;height:12.5px;background:#fff;border:1px solid #b4b4b4;box-sizing:border-box;border-radius:3px;"></div><svg class="s" style="left:106px;top:744.5px;" width="23" height="22" viewBox="0 0 23 22" fill="none"><path d="M11.5 1L14.2 8.4H22L15.7 13.1L18.1 20.8L11.5 16.1L4.9 20.8L7.3 13.1L1 8.4H8.8Z" fill="#9fd0f0" stroke="#2a6aa8" stroke-width="1.5" stroke-linejoin="round"/></svg><div class="t" style="top:750.76px;font-size:12.8px;color:#555;right:1150.20px;transform:scaleX(0.91);transform-origin:100% 0;">3</div><svg class="s" style="left:250px;top:745px;" width="23" height="23" viewBox="0 0 23 23" fill="none"><rect x="0.9" y="1.1" width="20" height="20" rx="1.2" stroke="#a3a3a3" stroke-width="1.5" fill="#fff"/><path d="M5.50 4.10L6.03 5.27L7.31 5.41L6.36 6.28L6.62 7.54L5.50 6.90L4.38 7.54L4.64 6.28L3.69 5.41L4.97 5.27Z" fill="#e8651e"/><path d="M5.50 9.60L6.03 10.77L7.31 10.91L6.36 11.78L6.62 13.04L5.50 12.40L4.38 13.04L4.64 11.78L3.69 10.91L4.97 10.77Z" fill="#e8651e"/><path d="M5.50 15.10L6.03 16.27L7.31 16.41L6.36 17.28L6.62 18.54L5.50 17.90L4.38 18.54L4.64 17.28L3.69 16.41L4.97 16.27Z" fill="#e8651e"/><path d="M9.5 5.8H17.5M9.5 11.2H17.5M9.5 16.8H12" stroke="#4a9fd8" stroke-width="1.3" stroke-linecap="round"/><circle cx="16.2" cy="16.5" r="5.3" fill="#acd9b0" stroke="#3cb36b" stroke-width="1.2"/></svg><div class="t" style="top:750.76px;font-size:12.8px;color:#1e1e1e;left:279.20px;">John Smith</div><div class="t" style="top:750.76px;font-size:12.8px;color:#333;right:615.60px;transform:scaleX(0.91);transform-origin:100% 0;">22.00 $/Hour</div><div class="t" style="top:750.76px;font-size:12.8px;color:#333;right:498.70px;transform:scaleX(0.91);transform-origin:100% 0;">40 000.00 $</div><div class="t" style="top:750.76px;font-size:12.8px;color:#444;right:381.40px;transform:scaleX(0.91);transform-origin:100% 0;">17.88 Km</div><div class="t" style="top:750.76px;font-size:12.8px;color:#111;left:1079.70px;">Active</div><div class="t" style="top:750.76px;font-size:12.8px;color:#444;right:145.00px;transform:scaleX(0.85);transform-origin:100% 0;">1 / 1</div><div class="t" style="top:778.76px;font-size:12.8px;color:#555;left:-237.00px;width:600px;text-align:center;">2</div><div class="r" style="left:85.5px;top:778.5px;width:13.0px;height:12.5px;background:#fff;border:1px solid #b4b4b4;box-sizing:border-box;border-radius:3px;"></div><svg class="s" style="left:106px;top:773px;" width="22" height="23" viewBox="0 0 22 23" fill="none"><circle cx="11" cy="6" r="4.8" fill="#a9dbb5" stroke="#3cb36b" stroke-width="1.3"/><path d="M1.5 22C1.5 15 5.5 12.5 11 12.5C16.5 12.5 20.5 15 20.5 22Z" fill="#a9dbb5" stroke="#3cb36b" stroke-width="1.3" stroke-linejoin="round"/></svg><div class="t" style="top:778.76px;font-size:12.8px;color:#555;right:1150.20px;transform:scaleX(0.91);transform-origin:100% 0;">125</div><svg class="s" style="left:250px;top:773px;" width="23" height="23" viewBox="0 0 23 23" fill="none"><rect x="0.9" y="1.1" width="20" height="20" rx="1.2" stroke="#a3a3a3" stroke-width="1.5" fill="#fff"/><path d="M5.50 4.10L6.03 5.27L7.31 5.41L6.36 6.28L6.62 7.54L5.50 6.90L4.38 7.54L4.64 6.28L3.69 5.41L4.97 5.27Z" fill="#e8651e"/><path d="M5.50 9.60L6.03 10.77L7.31 10.91L6.36 11.78L6.62 13.04L5.50 12.40L4.38 13.04L4.64 11.78L3.69 10.91L4.97 10.77Z" fill="#e8651e"/><path d="M5.50 15.10L6.03 16.27L7.31 16.41L6.36 17.28L6.62 18.54L5.50 17.90L4.38 18.54L4.64 17.28L3.69 16.41L4.97 16.27Z" fill="#e8651e"/><path d="M9.5 5.8H17.5M9.5 11.2H17.5M9.5 16.8H12" stroke="#4a9fd8" stroke-width="1.3" stroke-linecap="round"/><circle cx="16.2" cy="16.5" r="5.3" fill="#acd9b0" stroke="#3cb36b" stroke-width="1.2"/></svg><div class="t" style="top:778.76px;font-size:12.8px;color:#1e1e1e;left:279.20px;">Roxanne Desrochers, CRHA</div><div class="t" style="top:778.76px;font-size:12.8px;color:#444;right:381.40px;transform:scaleX(0.91);transform-origin:100% 0;">71.07 Km</div><div class="t" style="top:778.76px;font-size:12.8px;color:#111;left:1079.70px;">Active</div><div class="t" style="top:778.76px;font-size:12.8px;color:#444;right:145.00px;transform:scaleX(0.85);transform-origin:100% 0;">1 / 1</div><div class="t" style="top:806.76px;font-size:12.8px;color:#555;left:-237.00px;width:600px;text-align:center;">3</div><div class="r" style="left:85.5px;top:806.5px;width:13.0px;height:12.5px;background:#fff;border:1px solid #b4b4b4;box-sizing:border-box;border-radius:3px;"></div><svg class="s" style="left:106px;top:801px;" width="22" height="23" viewBox="0 0 22 23" fill="none"><circle cx="11" cy="6" r="4.8" fill="#a9dbb5" stroke="#3cb36b" stroke-width="1.3"/><path d="M1.5 22C1.5 15 5.5 12.5 11 12.5C16.5 12.5 20.5 15 20.5 22Z" fill="#a9dbb5" stroke="#3cb36b" stroke-width="1.3" stroke-linejoin="round"/></svg><div class="t" style="top:806.76px;font-size:12.8px;color:#555;right:1150.20px;transform:scaleX(0.91);transform-origin:100% 0;">8</div><svg class="s" style="left:250px;top:801px;" width="23" height="23" viewBox="0 0 23 23" fill="none"><rect x="0.9" y="1.1" width="20" height="20" rx="1.2" stroke="#a3a3a3" stroke-width="1.5" fill="#fff"/><path d="M5.50 4.10L6.03 5.27L7.31 5.41L6.36 6.28L6.62 7.54L5.50 6.90L4.38 7.54L4.64 6.28L3.69 5.41L4.97 5.27Z" fill="#e8651e"/><path d="M5.50 9.60L6.03 10.77L7.31 10.91L6.36 11.78L6.62 13.04L5.50 12.40L4.38 13.04L4.64 11.78L3.69 10.91L4.97 10.77Z" fill="#e8651e"/><path d="M5.50 15.10L6.03 16.27L7.31 16.41L6.36 17.28L6.62 18.54L5.50 17.90L4.38 18.54L4.64 17.28L3.69 16.41L4.97 16.27Z" fill="#e8651e"/><path d="M9.5 5.8H17.5M9.5 11.2H17.5M9.5 16.8H12" stroke="#4a9fd8" stroke-width="1.3" stroke-linecap="round"/><circle cx="16.2" cy="16.5" r="5.3" fill="#acd9b0" stroke="#3cb36b" stroke-width="1.2"/></svg><div class="t" style="top:806.76px;font-size:12.8px;color:#1e1e1e;left:279.20px;">Stephen Vincent</div><div class="t" style="top:806.76px;font-size:12.8px;color:#444;right:381.40px;transform:scaleX(0.91);transform-origin:100% 0;">581.99 Km</div><div class="t" style="top:806.76px;font-size:12.8px;color:#111;left:1079.70px;">Active</div><div class="t" style="top:806.76px;font-size:12.8px;color:#444;right:145.00px;transform:scaleX(0.85);transform-origin:100% 0;">1 / 1</div><div class="t" style="top:834.76px;font-size:12.8px;color:#555;left:-237.00px;width:600px;text-align:center;">4</div><div class="r" style="left:85.5px;top:834.5px;width:13.0px;height:12.5px;background:#fff;border:1px solid #b4b4b4;box-sizing:border-box;border-radius:3px;"></div><svg class="s" style="left:106px;top:829px;" width="22" height="23" viewBox="0 0 22 23" fill="none"><circle cx="11" cy="6" r="4.8" fill="#a9dbb5" stroke="#3cb36b" stroke-width="1.3"/><path d="M1.5 22C1.5 15 5.5 12.5 11 12.5C16.5 12.5 20.5 15 20.5 22Z" fill="#a9dbb5" stroke="#3cb36b" stroke-width="1.3" stroke-linejoin="round"/></svg><div class="t" style="top:834.76px;font-size:12.8px;color:#555;right:1150.20px;transform:scaleX(0.91);transform-origin:100% 0;">1</div><svg class="s" style="left:250px;top:829px;" width="23" height="23" viewBox="0 0 23 23" fill="none"><rect x="0.9" y="1.1" width="20" height="20" rx="1.2" stroke="#a3a3a3" stroke-width="1.5" fill="#fff"/><path d="M5.50 4.10L6.03 5.27L7.31 5.41L6.36 6.28L6.62 7.54L5.50 6.90L4.38 7.54L4.64 6.28L3.69 5.41L4.97 5.27Z" fill="#e8651e"/><path d="M5.50 9.60L6.03 10.77L7.31 10.91L6.36 11.78L6.62 13.04L5.50 12.40L4.38 13.04L4.64 11.78L3.69 10.91L4.97 10.77Z" fill="#e8651e"/><path d="M5.50 15.10L6.03 16.27L7.31 16.41L6.36 17.28L6.62 18.54L5.50 17.90L4.38 18.54L4.64 17.28L3.69 16.41L4.97 16.27Z" fill="#e8651e"/><path d="M9.5 5.8H17.5M9.5 11.2H17.5M9.5 16.8H12" stroke="#4a9fd8" stroke-width="1.3" stroke-linecap="round"/><circle cx="16.2" cy="16.5" r="5.3" fill="#acd9b0" stroke="#3cb36b" stroke-width="1.2"/></svg><div class="t" style="top:834.76px;font-size:12.8px;color:#1e1e1e;left:279.20px;">Robert Duval</div><div class="t" style="top:834.76px;font-size:12.8px;color:#444;right:381.40px;transform:scaleX(0.91);transform-origin:100% 0;">38.10 Km</div><div class="t" style="top:834.76px;font-size:12.8px;color:#111;left:1079.70px;">Active</div><div class="t" style="top:834.76px;font-size:12.8px;color:#444;right:145.00px;transform:scaleX(0.85);transform-origin:100% 0;">0 / 1</div><div class="r" style="left:45px;top:862.5px;width:1255px;height:21.5px;background:#efefef;"></div><div class="r" style="left:772px;top:867px;width:340px;height:12px;background:#c9c9c9;border-radius:6px;"></div><svg class="s" style="left:52px;top:868px;" width="6" height="10" viewBox="0 0 6 10" fill="none"><path d="M5.5 0.5V9.5L0.5 5Z" fill="#555"/></svg><svg class="s" style="left:1285px;top:868px;" width="6" height="10" viewBox="0 0 6 10" fill="none"><path d="M0.5 0.5V9.5L5.5 5Z" fill="#555"/></svg><div class="r" style="left:45px;top:855px;width:521px;height:7.5px;background:#fbfbfb;"></div><div class="r" style="left:567px;top:855px;width:733px;height:7.5px;background:#fbfbfb;"></div><div class="r" style="left:37px;top:885px;width:1272px;height:15px;background:#f8f8f8;"></div><div class="t" style="top:890.83px;font-size:12.6px;color:#555;font-weight:bold;left:304.40px;">Agency</div><div class="r" style="left:352px;top:896px;width:47px;height:1px;background:#666;"></div><div class="t" style="top:890.83px;font-size:12.6px;color:#555;font-weight:bold;left:426.50px;">Candidate</div><div class="r" style="left:489px;top:896px;width:33px;height:1px;background:#666;"></div><div class="t" style="top:890.83px;font-size:12.6px;color:#555;font-weight:bold;left:545.80px;">Client</div><div class="r" style="left:583px;top:896px;width:59px;height:1px;background:#666;"></div><svg class="s" style="left:1239px;top:762px;" width="52" height="52" viewBox="0 0 52 52" fill="none"><circle cx="26" cy="26" r="23" fill="#3b8fb4" stroke="#1d3f5e" stroke-width="3"/></svg><svg class="s" style="left:1256px;top:781px;" width="14" height="23" viewBox="0 0 14 23" fill="none"><path d="M6.2 0.8H12.2V22.2H6.2V7.8C4.8 8.9 3.2 9.7 1.5 10.2V5.3C3.6 4.5 5.2 3 6.2 0.8Z" fill="#fff"/></svg><div class="r" style="left:0px;top:900px;width:1333px;height:2px;background:#1d4467;"></div><div class="r" style="left:0px;top:902px;width:1392px;height:1px;background:#000;"></div>
</body></html>
